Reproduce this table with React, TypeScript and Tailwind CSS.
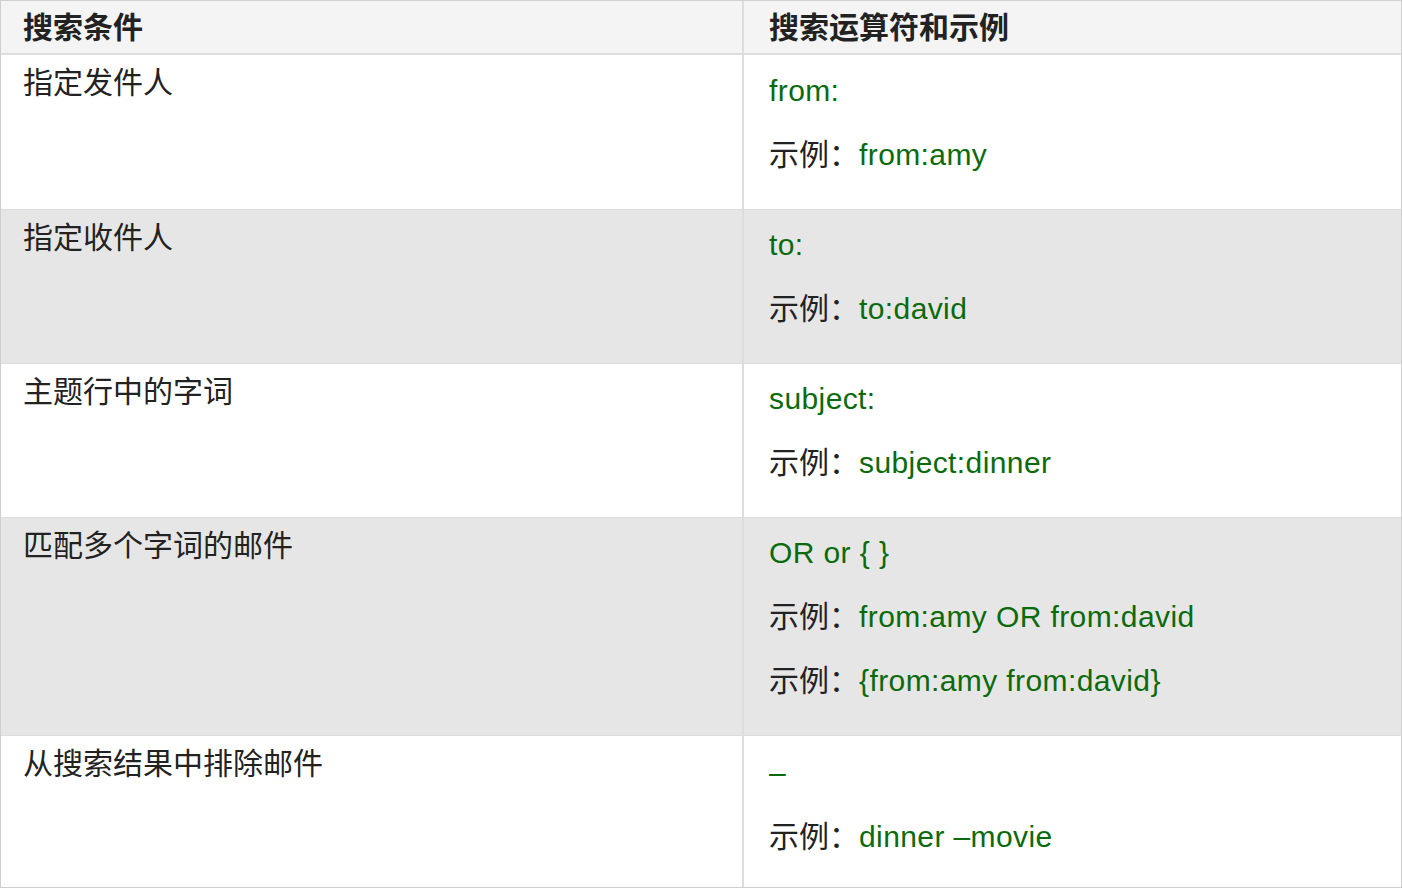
import React from "react";

const font = {
  fontFamily: '"Liberation Sans", "Noto Sans CJK SC", sans-serif',
};

type Line = { label?: boolean; code: string };
type Row = { cond: string; lines: Line[]; gray: boolean; pad: string };

const rows: Row[] = [
  {
    cond: "指定发件人",
    lines: [{ code: "from:" }, { label: true, code: "from:amy" }],
    gray: false,
    pad: "pt-[18px] pb-[36px]",
  },
  {
    cond: "指定收件人",
    lines: [{ code: "to:" }, { label: true, code: "to:david" }],
    gray: true,
    pad: "pt-[17px] pb-[36px]",
  },
  {
    cond: "主题行中的字词",
    lines: [{ code: "subject:" }, { label: true, code: "subject:dinner" }],
    gray: false,
    pad: "pt-[17px] pb-[36px]",
  },
  {
    cond: "匹配多个字词的邮件",
    lines: [
      { code: "OR or { }" },
      { label: true, code: "from:amy OR from:david" },
      { label: true, code: "{from:amy from:david}" },
    ],
    gray: true,
    pad: "pt-[17px] pb-[36px]",
  },
  {
    cond: "从搜索结果中排除邮件",
    lines: [{ code: "–" }, { label: true, code: "dinner –movie" }],
    gray: false,
    pad: "pt-[19px] pb-[32px]",
  },
];

export default function App() {
  return (
    <div
      className="w-[1402px] h-[888px] bg-white text-[#222] overflow-hidden"
      style={font}
    >
      <div className="border border-[#cfcfcf] w-full">
        <div className="grid grid-cols-[743px_1fr] bg-[#f4f4f4] border-b-2 border-[#dddddd]">
          <div className="h-[52px] pl-[22px] flex items-center border-r-2 border-[#dddddd] text-[30px] font-bold">
            搜索条件
          </div>
          <div className="h-[52px] pl-[25px] flex items-center text-[30px] font-bold">
            搜索运算符和示例
          </div>
        </div>
        {rows.map((r, i) => (
          <div
            key={i}
            className={`grid grid-cols-[743px_1fr] ${
              r.gray ? "bg-[#e6e6e6]" : "bg-white"
            } ${i > 0 ? "border-t border-[#dcdcdc]" : ""}`}
          >
            <div className="pl-[22px] pt-[10px] border-r-2 border-[#dddddd] text-[30px] leading-[36px]">
              {r.cond}
            </div>
            <div
              className={`pl-[25px] ${r.pad} flex flex-col gap-[28px] text-[30px] leading-[36px]`}
            >
              {r.lines.map((l, j) => (
                <div key={j} className="whitespace-pre">
                  {l.label ? <span className="text-[#222]">示例：</span> : null}
                  <span className="text-[#0b6a0b] tracking-[0.4px]">{l.code}</span>
                </div>
              ))}
            </div>
          </div>
        ))}
      </div>
    </div>
  );
}
